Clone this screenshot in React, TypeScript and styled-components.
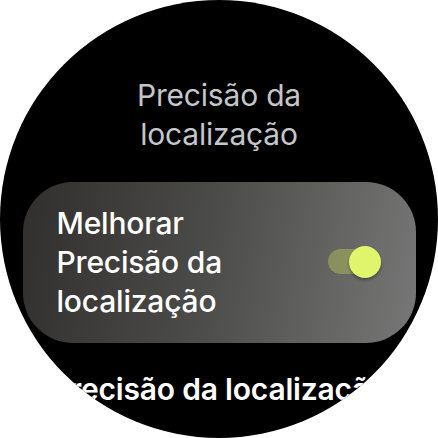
import React, { useState } from 'react'
import styled, { createGlobalStyle } from 'styled-components'

const GlobalStyle = createGlobalStyle`
  html, body {
    margin: 0;
    padding: 0;
    background: #ffffff;
  }
  body {
    font-family: Inter, Roboto, sans-serif;
  }
`

const Watch = styled.div`
  width: 438px;
  height: 438px;
  border-radius: 50%;
  overflow: hidden;
  background: #000000;
  display: flex;
  flex-direction: column;
  align-items: center;
`

const Title = styled.h1`
  margin: 76px 0 0;
  font-size: 30px;
  line-height: 39px;
  font-weight: 400;
  letter-spacing: -0.2px;
  color: #c3c6ca;
  text-align: center;
  width: 230px;
`

const Card = styled.div`
  margin-top: 28px;
  width: 393px;
  height: 161px;
  box-sizing: border-box;
  border-radius: 50px;
  padding: 0 44px 0 34px;
  display: flex;
  align-items: center;
  justify-content: space-between;
  background: linear-gradient(100deg, #312f2d 0%, #4a4a48 45%, #777777 100%);
  flex-shrink: 0;
`

const Label = styled.div`
  font-size: 30px;
  line-height: 39px;
  font-weight: 500;
  letter-spacing: -0.2px;
  color: #ffffff;
  width: 230px;
`

const Track = styled.button<{ on: boolean }>`
  position: relative;
  width: 44px;
  height: 25px;
  border: none;
  padding: 0;
  border-radius: 13px;
  background: ${(p) => (p.on ? 'rgba(170, 180, 90, 0.55)' : 'rgba(150, 150, 150, 0.5)')};
  cursor: pointer;
  margin-top: -2px;
`

const Thumb = styled.span<{ on: boolean }>`
  position: absolute;
  top: 50%;
  left: ${(p) => (p.on ? '21px' : '-8px')};
  width: 32px;
  height: 32px;
  margin-top: -16px;
  border-radius: 50%;
  background: ${(p) => (p.on ? '#e0f46c' : '#d0d0d0')};
  box-shadow: 0 2px 3px rgba(0, 0, 0, 0.35);
`

const Footer = styled.div`
  margin-top: 28px;
  font-size: 30px;
  line-height: 36px;
  font-weight: 600;
  letter-spacing: -0.2px;
  color: #ffffff;
  white-space: nowrap;
  text-align: center;
`

export default function App() {
  const [on, setOn] = useState(true)
  return (
    <>
      <GlobalStyle />
      <Watch>
        <Title>Precisão da localização</Title>
        <Card>
          <Label>Melhorar Precisão da localização</Label>
          <Track on={on} onClick={() => setOn(!on)}>
            <Thumb on={on} />
          </Track>
        </Card>
        <Footer>Precisão da localização</Footer>
      </Watch>
    </>
  )
}
